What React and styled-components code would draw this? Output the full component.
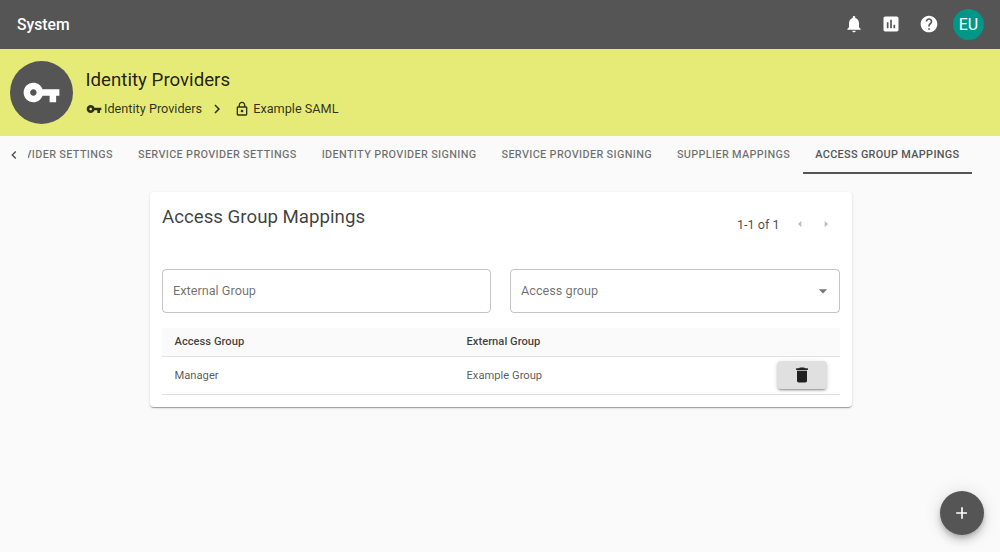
import React from "react";
import styled, { createGlobalStyle } from "styled-components";

const GlobalStyle = createGlobalStyle`
  html, body { margin: 0; padding: 0; height: 100%; background: #fafafa; overflow: hidden; }
  body { font-family: Roboto, "Liberation Sans", sans-serif; color: rgba(0,0,0,0.87); }
  * { box-sizing: border-box; }
`;

const Page = styled.div`
  height: 552px;
  display: flex;
  flex-direction: column;
`;

const TopBar = styled.header`
  height: 49px;
  flex: none;
  background: #555555;
  color: #fff;
  display: flex;
  align-items: center;
  padding: 0 16px 1px 17px;
`;

const BarTitle = styled.div`
  font-size: 15.7px;
  font-weight: 500;
  flex: 1;
`;

const BarIcon = styled.span`
  width: 20px;
  height: 20px;
  margin-right: 17.5px;
  display: flex;
  color: #fff;
`;

const UserBadge = styled.div`
  width: 31px;
  height: 31px;
  border-radius: 50%;
  background: #009688;
  color: #fff;
  font-size: 16px;
  display: flex;
  align-items: center;
  justify-content: center;
  margin-left: -3px;
`;

const Banner = styled.section`
  height: 87px;
  flex: none;
  background: #e6ea77;
  display: flex;
  align-items: center;
  padding: 0 0 1px 10px;
  color: rgba(0,0,0,0.87);
`;

const BannerBadge = styled.div`
  width: 63px;
  height: 63px;
  border-radius: 50%;
  background: #555555;
  color: #fff;
  display: flex;
  align-items: center;
  justify-content: center;
  margin-right: 12.5px;
`;

const BannerText = styled.div`
  display: flex;
  flex-direction: column;
  gap: 5px;
`;

const BannerTitle = styled.div`
  font-size: 18.7px;
  line-height: 28px;
`;

const Crumbs = styled.div`
  display: flex;
  align-items: center;
  font-size: 12.7px;
  line-height: 20px;
  height: 20px;
  color: rgba(0,0,0,0.8);
`;

const CrumbIcon = styled.span`
  width: ${(p) => p.$size}px;
  height: ${(p) => p.$size}px;
  display: flex;
  margin-right: ${(p) => p.$gap}px;
`;

const CrumbArrow = styled.span`
  width: 18px;
  height: 18px;
  display: flex;
  margin: 0 7.5px 0 6px;
`;

const TabBar = styled.nav`
  height: 38px;
  flex: none;
  display: flex;
  align-items: stretch;
  padding-right: 28px;
`;

const TabScrollButton = styled.span`
  width: 28px;
  flex: none;
  display: flex;
  align-items: center;
  justify-content: center;
  color: rgba(0,0,0,0.7);
`;

const TabTrack = styled.div`
  flex: 1;
  min-width: 0;
  display: flex;
  justify-content: flex-end;
  overflow: hidden;
`;

const Tab = styled.div`
  flex: none;
  padding: 0 12.5px;
  display: flex;
  align-items: center;
  font-size: 10.9px;
  font-weight: 500;
  letter-spacing: 0.32px;
  text-transform: uppercase;
  white-space: nowrap;
  color: ${(p) => (p.$active ? "#555555" : "rgba(0,0,0,0.56)")};
  border-bottom: 2px solid ${(p) => (p.$active ? "#555555" : "transparent")};
`;

const Content = styled.main`
  flex: 1;
  padding: 18px 0 0 2px;
  display: flex;
  justify-content: center;
`;

const Card = styled.section`
  width: 702px;
  height: 215px;
  background: #fff;
  border-radius: 4px;
  padding: 12px;
  box-shadow: 0 2px 1px -1px rgba(0,0,0,0.2), 0 1px 1px 0 rgba(0,0,0,0.14), 0 1px 3px 0 rgba(0,0,0,0.12);
`;

const CardHead = styled.div`
  display: flex;
  justify-content: space-between;
  align-items: flex-start;
  height: 65px;
`;

const CardTitle = styled.h2`
  margin: 0;
  font-size: 18.7px;
  font-weight: 400;
  line-height: 26px;
  color: rgba(0,0,0,0.76);
`;

const Pager = styled.div`
  display: flex;
  align-items: center;
  font-size: 12.6px;
  height: 24px;
  margin-top: 8px;
  padding-right: 6.5px;
  color: rgba(0,0,0,0.72);
`;

const PagerArrow = styled.span`
  width: 16px;
  height: 16px;
  display: flex;
  color: rgba(0,0,0,0.26);
  margin-left: ${(p) => p.$gap}px;
`;

const Fields = styled.div`
  display: grid;
  grid-template-columns: 329px 330px;
  column-gap: 19px;
`;

const Field = styled.div`
  height: 44px;
  border: 1px solid rgba(0,0,0,0.23);
  border-radius: 4px;
  padding: 0 10px 1px;
  display: flex;
  align-items: center;
  justify-content: space-between;
  font-size: 12.7px;
  color: rgba(0,0,0,0.58);
`;

const FieldArrow = styled.span`
  width: 20px;
  height: 20px;
  display: flex;
  color: rgba(0,0,0,0.54);
  margin-right: -4px;
`;

const Table = styled.div`
  margin-top: 15px;
  font-size: 11.2px;
`;

const Row = styled.div`
  display: grid;
  grid-template-columns: 292px 1fr auto;
  align-items: center;
  padding: 0 13px 1px 12.5px;
  height: ${(p) => (p.$head ? 29 : 38)}px;
  background: ${(p) => (p.$head ? "#fafafa" : "#fff")};
  font-weight: ${(p) => (p.$head ? 500 : 400)};
  color: ${(p) => (p.$head ? "rgba(0,0,0,0.76)" : "rgba(0,0,0,0.68)")};
  border-bottom: 1px solid #e0e0e0;
`;

const DeleteButton = styled.button`
  width: 50px;
  height: 28px;
  border: 0;
  padding: 0;
  border-radius: 4px;
  background: #e0e0e0;
  color: #212121;
  display: flex;
  align-items: center;
  justify-content: center;
  box-shadow: 0 3px 1px -2px rgba(0,0,0,0.2), 0 2px 2px 0 rgba(0,0,0,0.14), 0 1px 5px 0 rgba(0,0,0,0.12);
`;

const Fab = styled.button`
  position: fixed;
  right: 16px;
  bottom: 17px;
  width: 44px;
  height: 44px;
  border: 0;
  padding: 0;
  border-radius: 50%;
  background: #555555;
  color: #fff;
  display: flex;
  align-items: center;
  justify-content: center;
  box-shadow: 0 3px 5px -1px rgba(0,0,0,0.2), 0 6px 10px 0 rgba(0,0,0,0.14), 0 1px 18px 0 rgba(0,0,0,0.12);
`;

const paths = {
  key: "M12.65 10C11.83 7.67 9.61 6 7 6c-3.31 0-6 2.69-6 6s2.69 6 6 6c2.61 0 4.83-1.67 5.65-4H17v4h4v-4h2v-4H12.65zM7 14c-1.1 0-2-.9-2-2s.9-2 2-2 2 .9 2 2-.9 2-2 2z",
  bell: "M12 22c1.1 0 2-.9 2-2h-4c0 1.1.9 2 2 2zm6-6v-5c0-3.07-1.63-5.64-4.5-6.32V4c0-.83-.67-1.5-1.5-1.5s-1.5.67-1.5 1.5v.68C7.64 5.36 6 7.92 6 11v5l-2 2v1h16v-1l-2-2z",
  chart: "M19 3H5c-1.1 0-2 .9-2 2v14c0 1.1.9 2 2 2h14c1.1 0 2-.9 2-2V5c0-1.1-.9-2-2-2zM9 17H7v-7h2v7zm4 0h-2V7h2v10zm4 0h-2v-4h2v4z",
  help: "M12 2C6.48 2 2 6.48 2 12s4.48 10 10 10 10-4.48 10-10S17.52 2 12 2zm1 17h-2v-2h2v2zm2.07-7.75l-.9.92C13.45 12.9 13 13.5 13 15h-2v-.5c0-1.1.45-2.1 1.17-2.83l1.24-1.26c.37-.36.59-.86.59-1.41 0-1.1-.9-2-2-2s-2 .9-2 2H8c0-2.21 1.79-4 4-4s4 1.79 4 4c0 .88-.36 1.68-.93 2.25z",
  lock: "M18 8h-1V6c0-2.76-2.24-5-5-5S7 3.24 7 6v2H6c-1.1 0-2 .9-2 2v10c0 1.1.9 2 2 2h12c1.1 0 2-.9 2-2V10c0-1.1-.9-2-2-2zM9 6c0-1.66 1.34-3 3-3s3 1.34 3 3v2H9V6zm9 14H6V10h12v10zm-6-3c1.1 0 2-.9 2-2s-.9-2-2-2-2 .9-2 2 .9 2 2 2z",
  trash: "M6 19c0 1.1.9 2 2 2h8c1.1 0 2-.9 2-2V7H6v12zM19 4h-3.5l-1-1h-5l-1 1H5v2h14V4z",
  chevronRight: "M10 6L8.59 7.41 13.17 12l-4.58 4.59L10 18l6-6z",
  chevronLeft: "M15.41 7.41L14 6l-6 6 6 6 1.41-1.41L10.83 12z",
  arrowLeft: "M14 7l-5 5 5 5V7z",
  arrowRight: "M10 17l5-5-5-5v10z",
  dropdown: "M7 10l5 5 5-5z",
  plus: "M19 13h-6v6h-2v-6H5v-2h6V5h2v6h5v2z",
};

function Icon({ name, size = 24 }) {
  return (
    <svg width={size} height={size} viewBox="0 0 24 24" fill="currentColor" aria-hidden="true">
      <path d={paths[name]} />
    </svg>
  );
}

const tabs = [
  "Identity Provider Settings",
  "Service Provider Settings",
  "Identity Provider Signing",
  "Service Provider Signing",
  "Supplier Mappings",
  "Access Group Mappings",
];

export default function App() {
  return (
    <Page>
      <GlobalStyle />
      <TopBar>
        <BarTitle>System</BarTitle>
        <BarIcon><Icon name="bell" size={20} /></BarIcon>
        <BarIcon><Icon name="chart" size={20} /></BarIcon>
        <BarIcon><Icon name="help" size={20} /></BarIcon>
        <UserBadge>EU</UserBadge>
      </TopBar>

      <Banner>
        <BannerBadge><Icon name="key" size={39} /></BannerBadge>
        <BannerText>
          <BannerTitle>Identity Providers</BannerTitle>
          <Crumbs>
            <CrumbIcon $size={16} $gap={2.5}><Icon name="key" size={16} /></CrumbIcon>
            Identity Providers
            <CrumbArrow><Icon name="chevronRight" size={18} /></CrumbArrow>
            <CrumbIcon $size={16} $gap={3.5}><Icon name="lock" size={16} /></CrumbIcon>
            Example SAML
          </Crumbs>
        </BannerText>
      </Banner>

      <TabBar>
        <TabScrollButton><Icon name="chevronLeft" size={16} /></TabScrollButton>
        <TabTrack>
          {tabs.map((t, i) => (
            <Tab key={t} $active={i === tabs.length - 1}>{t}</Tab>
          ))}
        </TabTrack>
      </TabBar>

      <Content>
        <Card>
          <CardHead>
            <CardTitle>Access Group Mappings</CardTitle>
            <Pager>
              1-1 of 1
              <PagerArrow $gap={12}><Icon name="arrowLeft" size={16} /></PagerArrow>
              <PagerArrow $gap={10}><Icon name="arrowRight" size={16} /></PagerArrow>
            </Pager>
          </CardHead>
          <Fields>
            <Field>External Group</Field>
            <Field>
              Access group
              <FieldArrow><Icon name="dropdown" size={20} /></FieldArrow>
            </Field>
          </Fields>
          <Table>
            <Row $head>
              <span>Access Group</span>
              <span>External Group</span>
              <span />
            </Row>
            <Row>
              <span>Manager</span>
              <span>Example Group</span>
              <DeleteButton aria-label="Delete"><Icon name="trash" size={20} /></DeleteButton>
            </Row>
          </Table>
        </Card>
      </Content>

      <Fab aria-label="Add"><Icon name="plus" size={20} /></Fab>
    </Page>
  );
}
